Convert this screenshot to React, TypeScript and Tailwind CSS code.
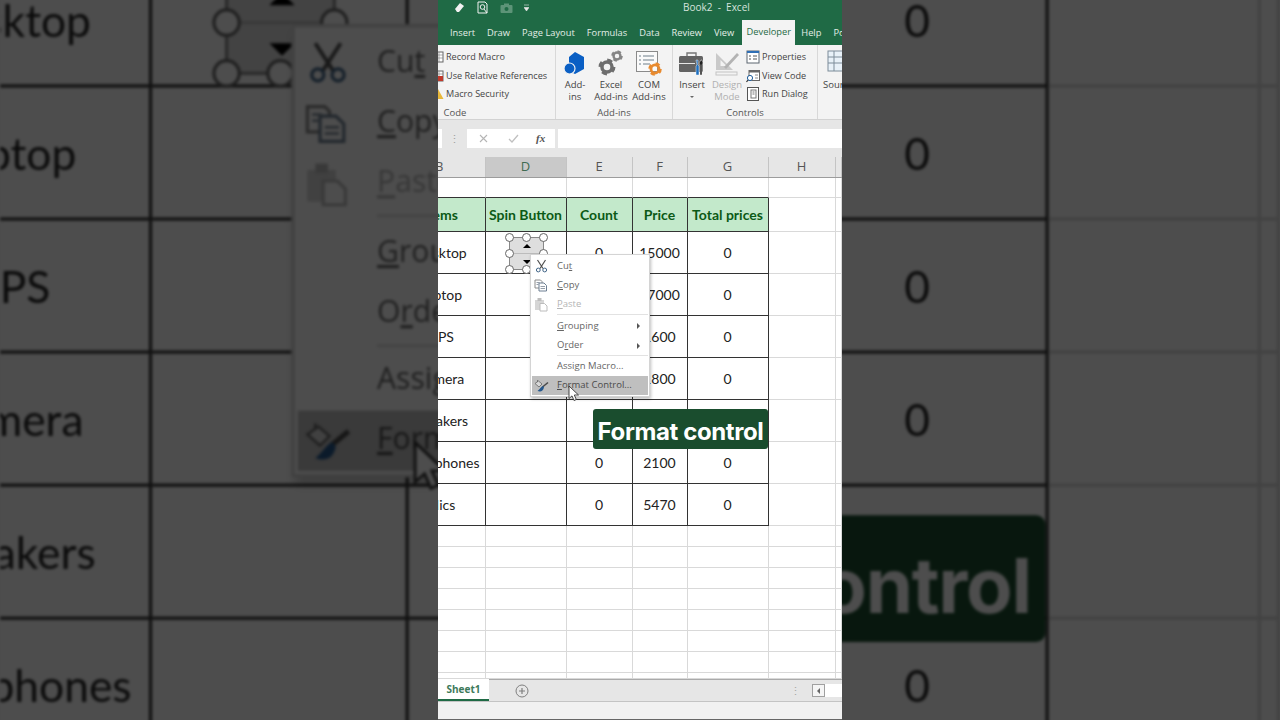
import React from 'react';

const TABS = ['Insert', 'Draw', 'Page Layout', 'Formulas', 'Data', 'Review', 'View'];

const COLUMNS = [
  { name: 'B', className: 'justify-end pr-[1px]' },
  { name: 'D', className: 'justify-center bg-[#c9c9c9] text-[#3f6b52]' },
  { name: 'E', className: 'justify-center' },
  { name: 'F', className: 'justify-center' },
  { name: 'G', className: 'justify-center' },
  { name: 'H', className: 'justify-center' },
  { name: '', className: '' },
];

const HEADERS = ['Items', 'Spin Button', 'Count', 'Price', 'Total prices'];

const ROWS = [
  ['Desktop', '', '0', '15000', '0'],
  ['Laptop', '', '0', '27000', '0'],
  ['UPS', '', '0', '1600', '0'],
  ['Camera', '', '0', '1800', '0'],
  ['Speakers', '', '0', '3200', '0'],
  ['Headphones', '', '0', '2100', '0'],
  ['Mics', '', '0', '5470', '0'],
];

interface CellProps {
  dark?: boolean;
  darkRight?: boolean;
  className?: string;
  children?: React.ReactNode;
}

function Cell({ dark, darkRight, className, children }: CellProps) {
  return (
    <div
      className={`flex items-center justify-center overflow-hidden border-r border-b ${
        darkRight ? 'border-r-[#333333]' : 'border-r-[#d9d9d9]'
      } ${dark ? 'border-b-[#333333]' : 'border-b-[#d9d9d9]'} ${className ?? ''}`}
    >
      {children}
    </div>
  );
}

// the first column is cut by the edge of the video, so its text centres left of the frame
function FirstColText({ children }: { children: React.ReactNode }) {
  return <span className="ml-[-41px] w-[88px] shrink-0 text-center">{children}</span>;
}

function Gear({ x, y, r, color }: { x: number; y: number; r: number; color: string }) {
  return (
    <g>
      <circle cx={x} cy={y} r={r * 0.72} fill="none" stroke={color} strokeWidth={r * 0.5} />
      <circle
        cx={x}
        cy={y}
        r={r}
        fill="none"
        stroke={color}
        strokeWidth={r * 0.42}
        strokeDasharray={`${r * 0.75} ${r * 0.82}`}
      />
    </g>
  );
}

function AddInsIcon() {
  return (
    <svg width="28" height="28" viewBox="0 0 28 28">
      <path d="M14 2l9 5v12l-9 5-6-3V7z" fill="#0a5fc4" />
      <circle cx="8.500" cy="18.500" r="5.500" fill="#0a5fc4" stroke="#f3f3f3" strokeWidth="1.200" />
    </svg>
  );
}

function ExcelAddInsIcon() {
  return (
    <svg width="28" height="28" viewBox="0 0 28 28">
      <Gear x={10} y={17} r={7} color="#6e6e6e" />
      <Gear x={20} y={6} r={4.8} color="#858585" />
    </svg>
  );
}

function ComIcon() {
  return (
    <svg width="28" height="28" viewBox="0 0 28 28">
      <rect x="1.500" y="1.500" width="21" height="20" fill="#fafafa" stroke="#8a8a8a" />
      <path d="M4 6h2M8 6h11M4 10h2M8 10h11M4 14h2M8 14h7" stroke="#6f7f8a" strokeWidth="1" />
      <Gear x={20} y={19} r={5.6} color="#e88a2e" />
    </svg>
  );
}

function InsertIcon() {
  return (
    <svg width="28" height="28" viewBox="0 0 28 28">
      <path d="M9 6V3h9v3" fill="none" stroke="#777" strokeWidth="1.400" />
      <rect x="1" y="6" width="24" height="16" rx="1.500" fill="#636363" />
      <rect x="1" y="13" width="16" height="1" fill="#e6e6e6" />
      <path d="M18 10h2v5l1 1v9h-3v-9l1-1z" fill="#1c6fc0" stroke="#f3f3f3" strokeWidth="0.500" />
      <path d="M23 10h1l1 3-1 2v10h-2V15l-1-2z" fill="#222" stroke="#f3f3f3" strokeWidth="0.500" />
    </svg>
  );
}

function DesignModeIcon() {
  return (
    <svg width="28" height="28" viewBox="0 0 28 28">
      <path d="M3 3v17h17z" fill="#c9c9c9" />
      <path d="M7.500 10v6h6z" fill="#f3f3f3" />
      <path d="M11 17L24 3l2 2-13 14z" fill="#b3b3b3" />
      <rect x="3" y="22" width="21" height="3" fill="none" stroke="#c4c4c4" />
    </svg>
  );
}

function PropertiesIcon() {
  return (
    <svg width="14" height="14" viewBox="0 0 14 14">
      <rect x="1" y="1" width="12" height="12" fill="#fff" stroke="#5c6670" />
      <rect x="1" y="1" width="12" height="2" fill="#2f6fb5" />
      <path d="M3 6h2M7 6h4M3 9h2M7 9h4" stroke="#555" />
    </svg>
  );
}

function ViewCodeIcon() {
  return (
    <svg width="14" height="14" viewBox="0 0 14 14">
      <rect x="3" y="1.500" width="10.500" height="10" fill="#fff" stroke="#666" />
      <rect x="3" y="1.500" width="10.500" height="2" fill="#666" />
      <circle cx="4" cy="9" r="2.600" fill="#fff" stroke="#1f5d99" />
      <path d="M2 11l-1.500 2" stroke="#333" strokeWidth="1.200" />
      <path d="M9 6h3M9 9h3" stroke="#888" />
    </svg>
  );
}

function RunDialogIcon() {
  return (
    <svg width="14" height="14" viewBox="0 0 14 14">
      <rect x="1.500" y="0.500" width="11" height="13" fill="#fff" stroke="#555" />
      <rect x="5" y="3" width="5" height="8" fill="none" stroke="#777" />
      <path d="M6.500 5h2M6.500 7h2" stroke="#777" />
    </svg>
  );
}

function SmallRowIcon({ kind }: { kind: 'record' | 'relative' | 'warning' }) {
  return (
    <svg width="12" height="12" viewBox="0 0 12 12" className="shrink-0">
      {kind === 'warning' ? (
        <path d="M6 1l5.500 10H.5z" fill="#e8b73a" />
      ) : (
        <g>
          <rect x="1" y="1" width="10" height="10" fill="#fff" stroke="#666" />
          <path d="M1 4h10M1 7h10M7 1v10" stroke="#888" strokeWidth="0.700" />
          {kind === 'relative' && <rect x="6" y="6" width="5" height="5" fill="#c0392b" />}
        </g>
      )}
    </svg>
  );
}

function ScissorsIcon() {
  return (
    <svg width="13" height="14" viewBox="0 0 13 14" fill="none">
      <path d="M2.500 1l5.500 8.500M10.500 1L5 9.500" stroke="#4f4f4f" strokeWidth="1.200" />
      <circle cx="3.300" cy="11" r="1.900" stroke="#3f6386" strokeWidth="1" />
      <circle cx="9.700" cy="11" r="1.900" stroke="#3f6386" strokeWidth="1" />
    </svg>
  );
}

function CopyIcon() {
  return (
    <svg width="14" height="13" viewBox="0 0 14 13" fill="#fff">
      <path d="M1 1h5.500L8 2.500V9H1z" stroke="#8a8a8a" />
      <path d="M5 4h5l2.500 2.500V12H5z" stroke="#6d7f92" />
      <path d="M6.500 7.500h4.500M6.500 9.500h4.500M2.500 3.500h3M2.500 5.500h2" stroke="#7b8794" strokeWidth="0.800" />
    </svg>
  );
}

function PasteIcon() {
  return (
    <svg width="14" height="15" viewBox="0 0 14 15">
      <rect x="1" y="3" width="9" height="10" fill="#d6d6d6" />
      <rect x="3.500" y="1" width="4" height="3" fill="#bdbdbd" />
      <path d="M6 6.500h4.500L13 9v5H6z" fill="#fff" stroke="#bcbcbc" />
    </svg>
  );
}

function FormatControlIcon() {
  return (
    <svg width="15" height="14" viewBox="0 0 15 14">
      <path d="M1 4.500L4.500 2 8 5 5 8z" fill="#d8d8d8" stroke="#666" strokeWidth="0.800" />
      <path d="M3.500 3V1" stroke="#666" strokeWidth="0.800" />
      <path d="M14 3.500L8.500 8" stroke="#4a4a4a" strokeWidth="1.600" />
      <path d="M9 7c-2 .5-3 3-5.500 5 3 1 5.500.5 6.500-3.500z" fill="#24578c" />
    </svg>
  );
}

function MenuCursor() {
  return (
    <svg width="12" height="17" viewBox="0 0 12 17">
      <path d="M1 1v12.500l3-2.600 2 4.600 2.300-1-2-4.500h4.200z" fill="#fff" stroke="#333" strokeWidth="0.900" />
    </svg>
  );
}

function Handle({ className }: { className: string }) {
  return (
    <span
      className={`absolute h-[9px] w-[9px] rounded-full border border-[#666666] bg-white ${className}`}
    />
  );
}

function RibbonRow({ icon, label }: { icon: React.ReactNode; label: string }) {
  return (
    <div className="flex h-[18.5px] items-center gap-[2px] text-[9.100px]">
      {icon}
      <span className="whitespace-nowrap">{label}</span>
    </div>
  );
}

function BigButton({
  icon,
  lines,
  className,
  gray,
  dropdown,
}: {
  icon: React.ReactNode;
  lines: string[];
  className: string;
  gray?: boolean;
  dropdown?: boolean;
}) {
  return (
    <div className={`flex flex-col items-center pt-[4px] ${className} ${gray ? 'text-[#b0b0b0]' : ''}`}>
      <div className="flex h-[30px] items-center justify-center">{icon}</div>
      {lines.map((line) => (
        <span key={line} className="whitespace-nowrap leading-[12px]">
          {line}
        </span>
      ))}
      {dropdown && (
        <span className="mt-[5px] h-0 w-0 border-x-[2px] border-t-[2px] border-x-transparent border-t-[#666666]" />
      )}
    </div>
  );
}

function GroupLabel({ children, className }: { children: string; className?: string }) {
  return (
    <div className={`h-[13px] text-center leading-[13px] text-[#555555] ${className ?? ''}`}>{children}</div>
  );
}

function MenuItem({
  icon,
  children,
  arrow,
  gray,
  active,
  className,
}: {
  icon?: React.ReactNode;
  children: React.ReactNode;
  arrow?: boolean;
  gray?: boolean;
  active?: boolean;
  className: string;
}) {
  return (
    <div
      className={`flex items-center ${className} ${active ? 'bg-[#bfbfbf] text-[#4a4a4a]' : ''} ${
        gray ? 'text-[#b5b5b5]' : ''
      }`}
    >
      <span className="mr-[7px] flex w-[18px] shrink-0 justify-center">{icon}</span>
      <span className="flex-1 whitespace-nowrap">{children}</span>
      {arrow && (
        <span className="mr-[8px] h-0 w-0 border-y-[3px] border-l-[3px] border-y-transparent border-l-[#555555]" />
      )}
    </div>
  );
}

function ExcelFrame() {
  return (
    <div className="relative flex h-[720px] w-[404px] shrink-0 flex-col overflow-hidden bg-white font-['Open_Sans',sans-serif] text-[9.500px] text-[#444444]">
      {/* Title bar */}
      <div className="relative flex h-[20px] shrink-0 items-start bg-[#1f6a45] pt-[1px]">
        <div className="flex items-center">
          <svg width="12" height="11" viewBox="0 0 12 11" className="ml-[15px]">
            <path d="M2 7l5-6 4 3-5 6H4z" fill="#f2f2f2" />
          </svg>
          <svg width="12" height="13" viewBox="0 0 12 13" fill="none" className="ml-[12px]">
            <path d="M1 1h7l2 2v9H1z" stroke="#f2f2f2" />
            <circle cx="5.500" cy="6" r="2.300" stroke="#f2f2f2" />
            <path d="M7 8l3 4" stroke="#f2f2f2" />
          </svg>
          <svg width="13" height="10" viewBox="0 0 13 10" className="ml-[11px]">
            <rect x="0.500" y="2" width="12" height="8" rx="1" fill="#5d9478" />
            <circle cx="6.500" cy="6" r="2" fill="#1f6a45" />
            <rect x="4" y="0.500" width="5" height="2" fill="#5d9478" />
          </svg>
          <svg width="5" height="8" viewBox="0 0 5 8" className="ml-[11px]">
            <path d="M0 1h5M0 3.500h5L2.500 7z" fill="#e6e6e6" stroke="#e6e6e6" strokeWidth="0.600" />
          </svg>
        </div>
        <div className="ml-[154px] whitespace-nowrap text-[10px] leading-[12px] text-[#d6e4dc]">
          Book2 &nbsp;-&nbsp; Excel
        </div>
      </div>

      {/* Ribbon tabs */}
      <div className="flex h-[25px] shrink-0 items-end gap-[12px] bg-[#1f6a45] pl-[12px] text-[9.300px] text-[#e4eee8]">
        {TABS.map((tab) => (
          <span key={tab} className="h-[20px] whitespace-nowrap leading-[16px]">
            {tab}
          </span>
        ))}
        <span className="ml-[-4px] h-[25px] w-[53px] shrink-0 bg-[#f3f3f3] text-center leading-[24px] text-[#1f6a45]">
          Developer
        </span>
        <span className="ml-[-6px] h-[20px] whitespace-nowrap leading-[16px]">Help</span>
        <span className="h-[20px] whitespace-nowrap leading-[16px]">Power</span>
      </div>

      {/* Ribbon */}
      <div className="flex h-[75px] shrink-0 border-b border-[#d2d2d2] bg-[#f3f3f3]">
        <div className="flex w-[118px] shrink-0 flex-col justify-between border-r border-[#d8d8d8]">
          <div className="ml-[-6px] pt-[3px]">
            <RibbonRow icon={<SmallRowIcon kind="record" />} label="Record Macro" />
            <RibbonRow icon={<SmallRowIcon kind="relative" />} label="Use Relative References" />
            <RibbonRow icon={<SmallRowIcon kind="warning" />} label="Macro Security" />
          </div>
          <GroupLabel className="w-[34px]">Code</GroupLabel>
        </div>

        <div className="flex w-[117px] shrink-0 flex-col justify-between border-r border-[#d8d8d8]">
          <div className="flex">
            <BigButton icon={<AddInsIcon />} lines={['Add-', 'ins']} className="w-[38px]" />
            <BigButton icon={<ExcelAddInsIcon />} lines={['Excel', 'Add-ins']} className="w-[34px]" />
            <BigButton icon={<ComIcon />} lines={['COM', 'Add-ins']} className="w-[42px]" />
          </div>
          <GroupLabel>Add-ins</GroupLabel>
        </div>

        <div className="flex w-[145px] shrink-0 flex-col justify-between border-r border-[#d8d8d8]">
          <div className="flex">
            <BigButton icon={<InsertIcon />} lines={['Insert']} className="w-[38px]" dropdown />
            <BigButton icon={<DesignModeIcon />} lines={['Design', 'Mode']} className="w-[32px]" gray />
            <div className="pl-[3px] pt-[3px]">
              <RibbonRow icon={<PropertiesIcon />} label="Properties" />
              <RibbonRow icon={<ViewCodeIcon />} label="View Code" />
              <RibbonRow icon={<RunDialogIcon />} label="Run Dialog" />
            </div>
          </div>
          <GroupLabel>Controls</GroupLabel>
        </div>

        <div className="flex flex-col pl-[5px] pt-[5px]">
          <svg width="22" height="22" viewBox="0 0 22 22" className="ml-[4px]">
            <rect x="1" y="1" width="20" height="20" fill="#e8f1f8" stroke="#7d8c99" />
            <path d="M1 7h20M1 13h20M7 1v20" stroke="#7d8c99" />
          </svg>
          <span className="mt-[6px] whitespace-nowrap">Source</span>
        </div>
      </div>

      {/* Formula bar */}
      <div className="flex h-[37px] shrink-0 items-center bg-[#e6e6e6] pb-[1px]">
        <div className="h-[19px] w-[4px] bg-white" />
        <div className="flex w-[25px] justify-center text-[11px] leading-none text-[#a0a0a0]">⋮</div>
        <div className="flex h-[19px] w-[88px] items-center bg-white text-[#b5b5b5]">
          <span className="ml-[10px] flex w-[12px] justify-center">
            <svg width="9" height="9" viewBox="0 0 9 9">
              <path d="M1 1l7 7M8 1L1 8" stroke="#b5b5b5" strokeWidth="1.100" />
            </svg>
          </span>
          <span className="ml-[18px] flex w-[12px] justify-center">
            <svg width="11" height="9" viewBox="0 0 11 9" fill="none">
              <path d="M1 5l3 3 6-7" stroke="#c0c0c0" strokeWidth="1.300" />
            </svg>
          </span>
          <span className="ml-[17px] font-['Liberation_Serif',serif] text-[11px] font-bold italic text-[#555555]">fx</span>
        </div>
        <div className="ml-[3px] h-[19px] flex-1 bg-white" />
      </div>

      {/* Column headers */}
      <div className="grid h-[21px] shrink-0 grid-cols-[47.500px_81px_66px_55px_81px_67px_1fr] border-b border-[#9c9c9c] bg-[#e6e6e6] text-[13px] text-[#555555]">
        {COLUMNS.map((col) => (
          <div key={col.name} className={`flex items-center border-r border-[#c4c4c4] ${col.className}`}>
            <span className={col.name === 'B' ? 'mr-[40px]' : ''}>{col.name}</span>
          </div>
        ))}
      </div>

      {/* Sheet */}
      <div className="grid min-h-0 flex-1 grid-cols-[47.500px_81px_66px_55px_81px_67px_1fr] grid-rows-[20px_34px_repeat(7,42px)_repeat(7,21px)_1fr] font-['Lato',sans-serif] text-[14px] text-[#222222]">
        {[0, 1, 2, 3, 4, 5, 6].map((col) => (
          <Cell key={`top-${col}`} dark={col < 5} />
        ))}

        {HEADERS.map((header, i) => (
          <Cell key={header} dark darkRight className="bg-[#c3e9cb] font-bold text-[#0b5a16]">
            {i === 0 ? <FirstColText>{header}</FirstColText> : <span className="whitespace-nowrap">{header}</span>}
          </Cell>
        ))}
        <Cell />
        <Cell />

        {ROWS.map((row) => (
          <React.Fragment key={row[0]}>
            {row.map((value, i) => (
              <Cell key={i} dark darkRight>
                {i === 0 ? <FirstColText>{value}</FirstColText> : value}
              </Cell>
            ))}
            <Cell />
            <Cell />
          </React.Fragment>
        ))}

        {Array.from({ length: 56 }, (_, i) => (
          <Cell key={`blank-${i}`} />
        ))}
      </div>

      {/* Sheet tabs */}
      <div className="flex h-[22px] shrink-0 items-center border-t border-[#aaaaaa] bg-[#e6e6e6]">
        <div className="mt-[-1px] h-[22px] w-[51px] border-b-2 border-[#1f6a45] bg-white text-center text-[10px] font-bold leading-[21px] text-[#3d7a5a]">
          Sheet1
        </div>
        <svg width="14" height="14" viewBox="0 0 14 14" fill="none" className="ml-[26px]">
          <circle cx="7" cy="7" r="6" stroke="#7f7f7f" />
          <path d="M7 4v6M4 7h6" stroke="#7f7f7f" strokeWidth="1.200" />
        </svg>
        <div className="ml-auto flex items-center">
          <span className="text-[11px] leading-none text-[#a6a6a6]">⋮</span>
          <div className="ml-[11px] flex h-[13px] w-[13px] items-center justify-center border border-[#a0a0a0] bg-[#f5f5f5]">
            <span className="h-0 w-0 border-y-[3px] border-r-[3px] border-y-transparent border-r-[#666666]" />
          </div>
          <div className="h-[13px] w-[17px] bg-white" />
        </div>
      </div>

      {/* Status bar */}
      <div className="h-[19px] shrink-0 border-t border-b border-t-[#c4c4c4] border-b-[#666666] bg-[#f1f1f1]" />

      {/* Spin button selected on the sheet */}
      <div className="absolute left-[71px] top-[237px] flex h-[33px] w-[35px] flex-col border border-[#888888] bg-[#dedede]">
        <div className="flex flex-1 items-center justify-center border-b border-[#bcbcbc]">
          <span className="h-0 w-0 border-x-[4px] border-b-[4px] border-x-transparent border-b-black" />
        </div>
        <div className="flex flex-1 items-center justify-center">
          <span className="h-0 w-0 border-x-[4px] border-t-[4px] border-x-transparent border-t-black" />
        </div>
        <Handle className="left-[-5px] top-[-5px]" />
        <Handle className="left-[12px] top-[-5px]" />
        <Handle className="right-[-5px] top-[-5px]" />
        <Handle className="left-[-5px] top-[11px]" />
        <Handle className="right-[-5px] top-[11px]" />
        <Handle className="bottom-[-5px] left-[-5px]" />
        <Handle className="bottom-[-5px] left-[12px]" />
      </div>

      {/* Context menu */}
      <div className="absolute left-[92px] top-[254px] w-[120px] border border-[#d4d4d4] bg-white p-[1px] text-[#666666] shadow-[1px_2px_3px_rgba(0,0,0,0.25)]">
        <MenuItem className="h-[20px]" icon={<ScissorsIcon />}>
          Cu<u>t</u>
        </MenuItem>
        <MenuItem className="h-[19px]" icon={<CopyIcon />}>
          <u>C</u>opy
        </MenuItem>
        <MenuItem className="h-[19px]" icon={<PasteIcon />} gray>
          <u>P</u>aste
        </MenuItem>
        <div className="ml-[25px] border-t border-[#e2e2e2]" />
        <MenuItem className="h-[21px] pt-[1px]" arrow>
          <u>G</u>rouping
        </MenuItem>
        <MenuItem className="h-[19px]" arrow>
          O<u>r</u>der
        </MenuItem>
        <div className="ml-[25px] border-t border-[#e2e2e2]" />
        <MenuItem className="h-[20px]">
          Assi<u>g</u>n Macro...
        </MenuItem>
        <MenuItem className="h-[19px]" icon={<FormatControlIcon />} active>
          <u>F</u>ormat Control...
        </MenuItem>
      </div>

      {/* Mouse pointer */}
      <div className="absolute left-[130px] top-[385px]">
        <MenuCursor />
      </div>

      {/* Caption */}
      <div className="absolute left-[155px] top-[409px] flex h-[40px] w-[175px] items-center justify-center rounded-[3px] bg-[#1a4d2e] pt-[5px] font-['Inter',sans-serif] text-[24px] font-bold tracking-[-0.4px] text-white">
        Format control
      </div>
    </div>
  );
}

export default function App() {
  return (
    <div className="relative flex h-[720px] w-[1280px] justify-center overflow-hidden bg-[#4d4d4d]">
      {/* Blurred, dimmed copy of the video that fills the sides */}
      <div className="absolute inset-0 flex justify-center" aria-hidden="true">
        <div className="scale-[3.168] blur-[0.5px] brightness-[0.302]">
          <ExcelFrame />
        </div>
      </div>
      <div className="relative">
        <ExcelFrame />
      </div>
    </div>
  );
}
